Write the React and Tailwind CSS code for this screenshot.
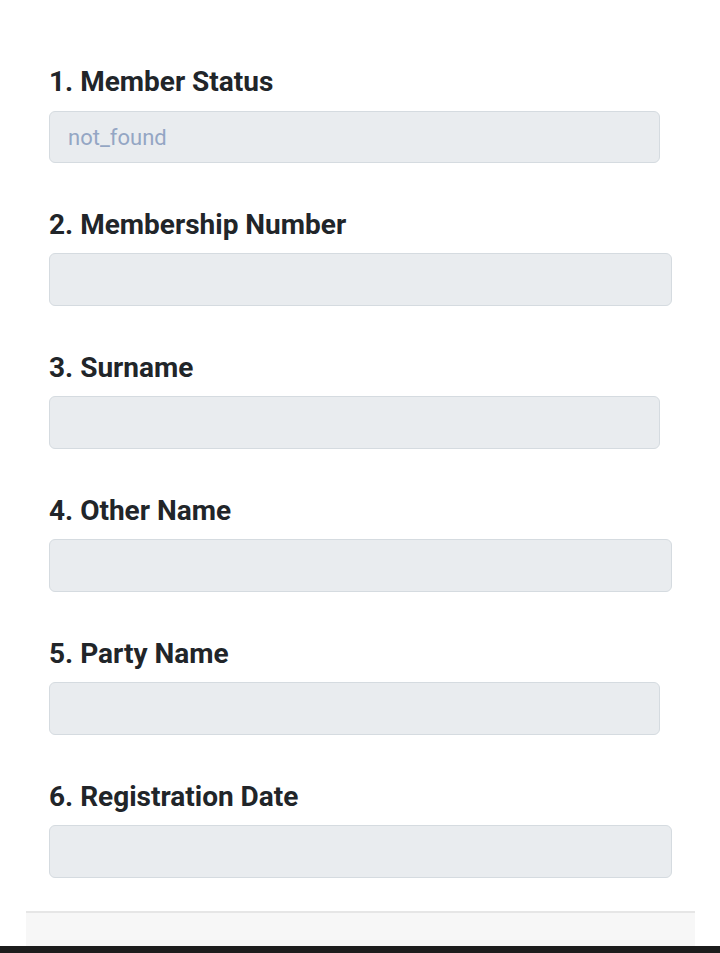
import React from "react";

const fields = [
  { label: "1. Member Status", value: "not_found", w: "w-[611px]", h: "h-[52px]" },
  { label: "2. Membership Number", value: "", w: "w-[623px]", h: "h-[53px]" },
  { label: "3. Surname", value: "", w: "w-[611px]", h: "h-[53px]" },
  { label: "4. Other Name", value: "", w: "w-[623px]", h: "h-[53px]" },
  { label: "5. Party Name", value: "", w: "w-[611px]", h: "h-[53px]" },
  { label: "6. Registration Date", value: "", w: "w-[623px]", h: "h-[53px]" },
];

export default function App() {
  return (
    <div className="w-[720px] h-[953px] bg-white overflow-hidden flex flex-col" style={{ fontFamily: "Roboto, 'Noto Sans', sans-serif" }}>
      <div className="pl-[49px] pt-[65px] flex flex-col gap-[45px]">
        {fields.map((f, i) => (
          <div key={f.label} className={`flex flex-col ${i === 0 ? "gap-[12px]" : "gap-[11px]"}`}>
            <div className="text-[28px] leading-[34px] font-bold text-[#212529]">{f.label}</div>
            <div className={`${f.w} ${f.h} bg-[#e9ecef] border border-[#d5dbe0] rounded-[6px] flex items-center pl-[18px] text-[22px] text-[#94a6c4]`}>
              {f.value}
            </div>
          </div>
        ))}
      </div>
      <div className="mt-[33px] ml-[26px] w-[669px] h-[35px] bg-[#f7f7f7] border-t-2 border-[#e6e6e6]"></div>
      <div className="h-[7px] bg-[#1c1c1c]"></div>
    </div>
  );
}
